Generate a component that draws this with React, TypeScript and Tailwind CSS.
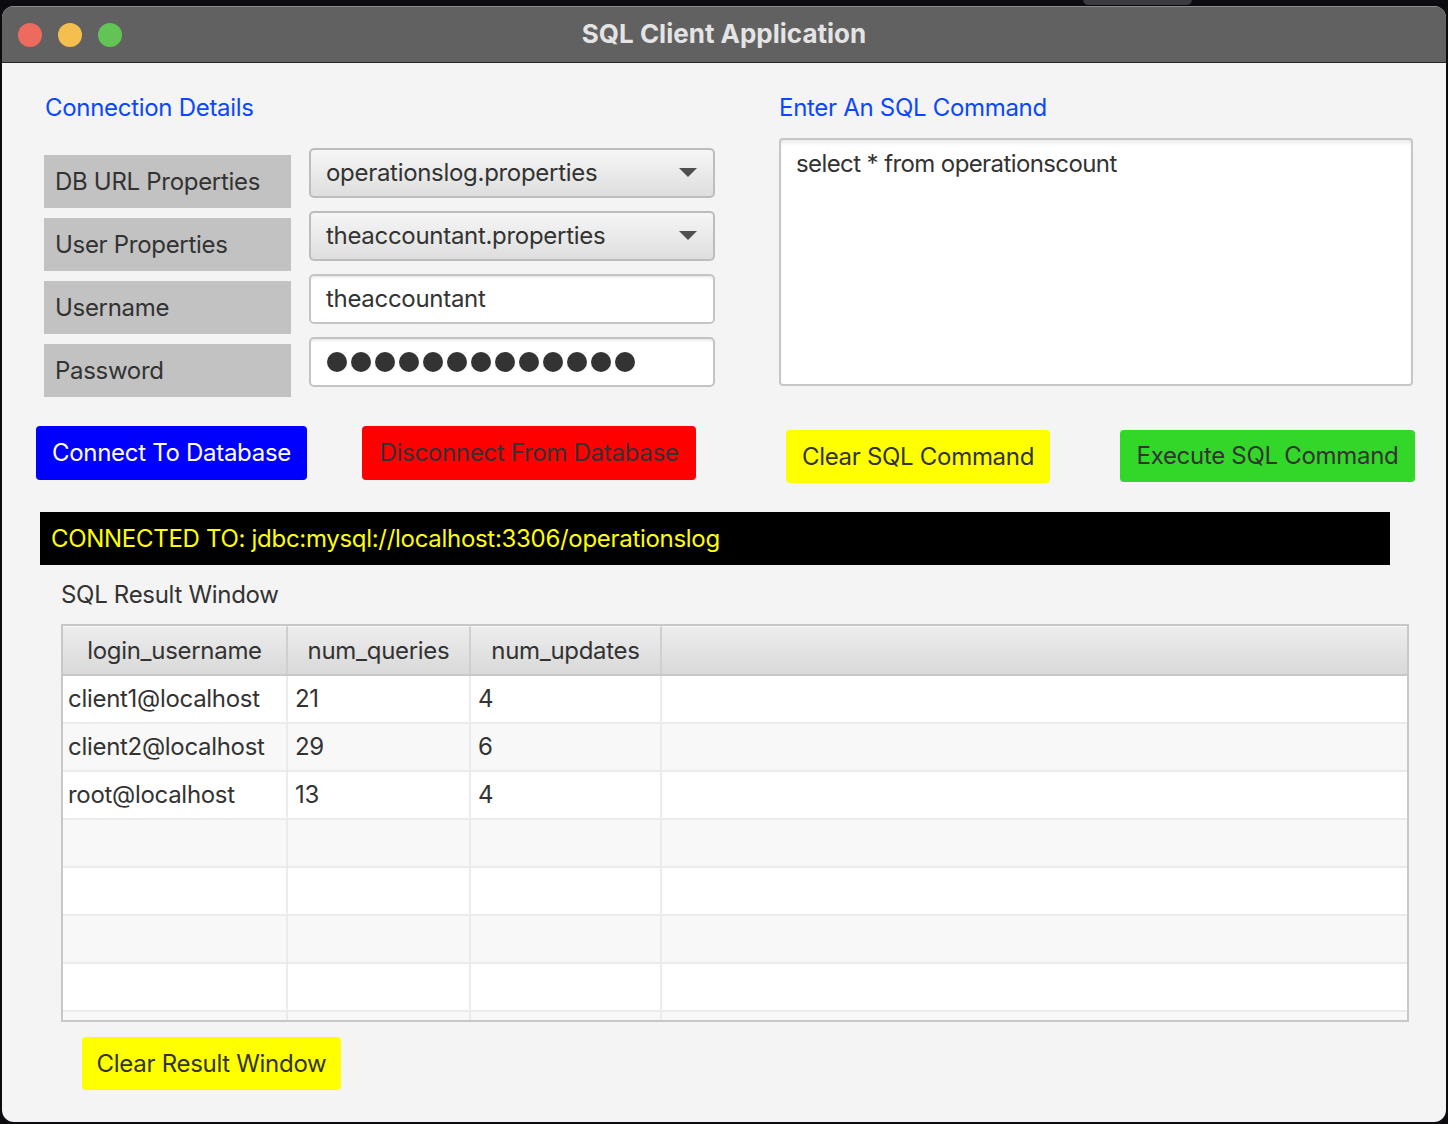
import { useState } from "react"

const results = [
  ["client1@localhost", "21", "4"],
  ["client2@localhost", "29", "6"],
  ["root@localhost", "13", "4"],
  ["", "", ""],
  ["", "", ""],
  ["", "", ""],
  ["", "", ""],
  ["", "", ""],
]

const columns = [
  { name: "login_username", width: "w-[225px]" },
  { name: "num_queries", width: "w-[183px]" },
  { name: "num_updates", width: "w-[191px]" },
]

function ComboBox({ value }: { value: string }) {
  return (
    <div className="w-[406px] h-[50px] rounded-[5px] border-2 border-[#bdbdbd] bg-gradient-to-b from-[#f6f6f6] to-[#dedede] flex items-center justify-between pl-[15px] pr-[16px]">
      <span>{value}</span>
      <svg width="18" height="10" viewBox="0 0 18 10">
        <path d="M0 0 L18 0 L9 9 Z" fill="#4f4f4f" />
      </svg>
    </div>
  )
}

function FieldLabel({ text }: { text: string }) {
  return <div className="w-[247px] h-[53px] mt-[7px] bg-[#c2c2c2] flex items-center pl-[11px]">{text}</div>
}

export default function App() {
  const [sql] = useState("select * from operationscount")

  return (
    <div className="w-[1448px] h-[1124px] bg-[#0b0b10] relative overflow-hidden font-['Inter',sans-serif] text-[24px] leading-[30px] text-[#333333] tracking-[-0.3px]">
      {/* window behind */}
      <div className="absolute left-[1083px] top-[-6px] w-[109px] h-[11px] rounded-[6px] bg-[#3a3a3f]"></div>

      <div className="absolute left-[2px] top-[6px] w-[1444px] h-[1116px] rounded-[12px] overflow-hidden bg-[#f4f4f4] flex flex-col">
        {/* title bar */}
        <div className="h-[57px] bg-[#616161] border-t border-[#8a8a8a] border-b border-b-[#262626] flex items-center relative shrink-0">
          <div className="flex items-center gap-[16px] pl-[16px] pt-[1px]">
            <span className="w-[24px] h-[24px] rounded-full bg-[#ed6a5e]"></span>
            <span className="w-[24px] h-[24px] rounded-full bg-[#f4bf4f]"></span>
            <span className="w-[24px] h-[24px] rounded-full bg-[#61c454]"></span>
          </div>
          <div className="absolute inset-0 flex items-center justify-center text-[#e4e4e4] text-[26px] font-bold tracking-normal pb-[1px]">
            SQL Client Application
          </div>
        </div>

        {/* connection + command */}
        <div className="flex pt-[30px]">
          <div className="ml-[42px] w-[671px]">
            <div className="text-[#0a47ff] pl-[1px]">Connection Details</div>
            <div className="mt-[25px] flex flex-col gap-[3px]">
              <div className="flex items-start gap-[18px]">
                <FieldLabel text="DB URL Properties" />
                <ComboBox value="operationslog.properties" />
              </div>
              <div className="flex items-start gap-[18px]">
                <FieldLabel text="User Properties" />
                <ComboBox value="theaccountant.properties" />
              </div>
              <div className="flex items-start gap-[18px]">
                <FieldLabel text="Username" />
                <div className="w-[406px] h-[50px] rounded-[5px] border-2 border-[#c4c4c4] bg-white shadow-[inset_0_3px_3px_-2px_rgba(0,0,0,0.12)] flex items-center pl-[15px]">
                  theaccountant
                </div>
              </div>
              <div className="flex items-start gap-[18px]">
                <FieldLabel text="Password" />
                <div className="w-[406px] h-[50px] rounded-[5px] border-2 border-[#c4c4c4] bg-white shadow-[inset_0_3px_3px_-2px_rgba(0,0,0,0.12)] flex items-center pl-[16px] gap-[4px]">
                  {Array.from({ length: 13 }).map((_, i) => (
                    <span key={i} className="w-[20px] h-[20px] rounded-full bg-[#333333]"></span>
                  ))}
                </div>
              </div>
            </div>
          </div>

          <div className="ml-[64px] w-[634px]">
            <div className="text-[#0a47ff]">Enter An SQL Command</div>
            <div className="mt-[15px] h-[248px] rounded-[4px] border-2 border-[#c6c6c6] bg-white shadow-[inset_0_6px_6px_-4px_rgba(0,0,0,0.1)] pl-[15px] pt-[9px] tracking-[-0.6px]">
              {sql}
            </div>
          </div>
        </div>

        {/* action buttons */}
        <div className="flex items-start mt-[29px]">
          <button className="ml-[34px] w-[271px] h-[54px] rounded-[4px] bg-[#0000ff] text-white flex items-center justify-center">
            Connect To Database
          </button>
          <button className="ml-[55px] w-[334px] h-[54px] rounded-[4px] bg-[#ff0000] text-[#333333] flex items-center justify-center">
            Disconnect From Database
          </button>
          <button className="ml-[90px] mt-[4px] w-[264px] h-[53px] rounded-[4px] bg-[#ffff00] text-[#333333] flex items-center justify-center">
            Clear SQL Command
          </button>
          <button className="ml-[70px] mt-[4px] w-[295px] h-[52px] rounded-[4px] bg-[#33d72a] text-[#333333] flex items-center justify-center">
            Execute SQL Command
          </button>
        </div>

        {/* status bar */}
        <div className="ml-[38px] mt-[29px] w-[1350px] h-[53px] bg-black text-[#ffff00] flex items-center pl-[11px]">
          CONNECTED TO: jdbc:mysql://localhost:3306/operationslog
        </div>

        {/* results */}
        <div className="ml-[59px] mt-[15px]">SQL Result Window</div>
        <div className="ml-[59px] mt-[14px] w-[1348px] h-[398px] border-2 border-[#c8c8c8] overflow-hidden bg-white">
          <div className="flex h-[50px] border-b-2 border-[#c8c8c8]">
            {columns.map((c) => (
              <div
                key={c.name}
                className={`${c.width} h-full flex items-center justify-center bg-gradient-to-b from-[#ededed] to-[#d9d9d9] border-r-2 border-[#cfcfcf] border-t border-t-[#f7f7f7]`}
              >
                {c.name}
              </div>
            ))}
            <div className="flex-1 h-full bg-gradient-to-b from-[#ededed] to-[#d9d9d9] border-t border-t-[#f7f7f7]"></div>
          </div>
          {results.map((r, i) => (
            <div
              key={i}
              className={`flex h-[48px] border-b-2 border-[#ebebeb] ${i % 2 === 0 ? "bg-white" : "bg-[#f8f8f8]"}`}
            >
              <div className="w-[225px] h-full flex items-center pl-[5px] border-r-2 border-[#ebebeb]">{r[0]}</div>
              <div className="w-[183px] h-full flex items-center pl-[7px] border-r-2 border-[#ebebeb]">{r[1]}</div>
              <div className="w-[191px] h-full flex items-center pl-[7px] border-r-2 border-[#ebebeb]">{r[2]}</div>
              <div className="flex-1 h-full"></div>
            </div>
          ))}
        </div>

        <button className="ml-[80px] mt-[15px] w-[259px] h-[53px] rounded-[4px] bg-[#ffff00] text-[#333333] flex items-center justify-center">
          Clear Result Window
        </button>
      </div>
    </div>
  )
}
